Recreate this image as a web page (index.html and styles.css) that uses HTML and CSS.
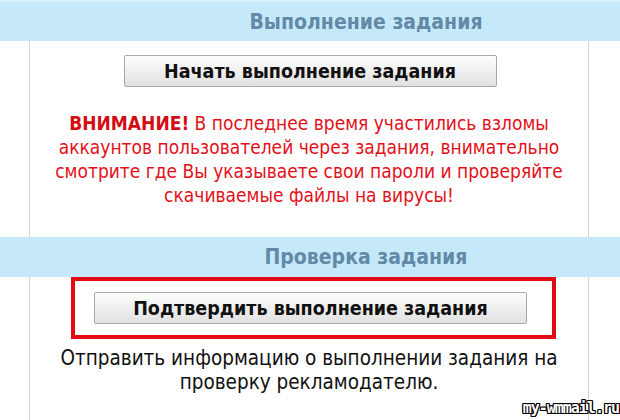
FILE: index.html
```html
<!DOCTYPE html>
<html lang="ru">
<head>
  <meta charset="UTF-8">
  <title>Выполнение задания</title>
  <link rel="stylesheet" href="styles.css">
</head>
<body>
  <div class="task">
    <div class="task-head"><h2>Выполнение задания</h2></div>
    <div class="task-box">
      <button class="btn btn-start">Начать выполнение задания</button>
      <p class="warning"><b>ВНИМАНИЕ!</b> В последнее время участились взломы аккаунтов пользователей через задания, внимательно смотрите где Вы указываете свои пароли и проверяйте скачиваемые файлы на вирусы!</p>
    </div>

    <div class="task-head"><h2>Проверка задания</h2></div>
    <div class="task-box">
      <div class="highlight">
        <button class="btn btn-confirm">Подтвердить выполнение задания</button>
      </div>
      <p class="note">Отправить информацию о выполнении задания на проверку рекламодателю.</p>
    </div>
  </div>
  <div class="watermark">my-wmmail.ru</div>
</body>
</html>
```

FILE: styles.css
```css
body {
  margin: 0;
  font-family: "DejaVu Sans Condensed", "DejaVu Sans", sans-serif;
  background: #fff;
  overflow: hidden;
}
.task-head {
  background-color: #c6e9fa;
  height: 40px;
  padding-left: 112px;
  text-align: center;
}
.task-head:first-child {
  border-top: 2px solid #d9f1fc;
  height: 39px;
}
.task-head h2 {
  margin: 0;
  font-size: 21px;
  line-height: 40px;
  color: #6289a6;
}
.task-box {
  margin-left: 29px;
  width: 558px;
  border-left: 1px solid #d4d4d4;
  border-right: 1px solid #d4d4d4;
  text-align: center;
}
.task-box:nth-child(2) {
  padding: 14px 0 30px;
}
.btn {
  font-family: inherit;
  font-weight: bold;
  font-size: 19.5px;
  color: #111;
  height: 32px;
  padding: 0;
  background: linear-gradient(#fdfdfd, #e1e1e1);
  border: 1px solid #a9a9a9;
  border-radius: 2px;
  cursor: pointer;
}
.btn-start {
  width: 373px;
  margin-left: 2px;
}
.warning {
  margin: 24px 0 0;
  padding: 0 6px;
  font-size: 19px;
  line-height: 24px;
  color: #e31019;
}
.warning b {
  color: #d40d14;
}
.highlight {
  margin-left: 41px;
  width: 458px;
  border: 4px solid #e20a13;
  padding: 11px 0 11px 19px;
  text-align: left;
}
.btn-confirm {
  width: 433px;
}
.note {
  margin: 7px 0 0;
  padding: 0 20px 40px;
  font-size: 20.5px;
  line-height: 24px;
  color: #111;
}
.watermark {
  position: absolute;
  right: 1px;
  bottom: 3px;
  font-family: "DejaVu Sans Mono", monospace;
  font-weight: bold;
  font-size: 15px;
  letter-spacing: -1px;
  color: #fff;
  text-shadow: 1px 0 0 #000, -1px 0 0 #000, 0 1px 0 #000, 0 -1px 0 #000, 1px 1px 0 #000, -1px -1px 0 #000, 1px -1px 0 #000, -1px 1px 0 #000;
}
```
